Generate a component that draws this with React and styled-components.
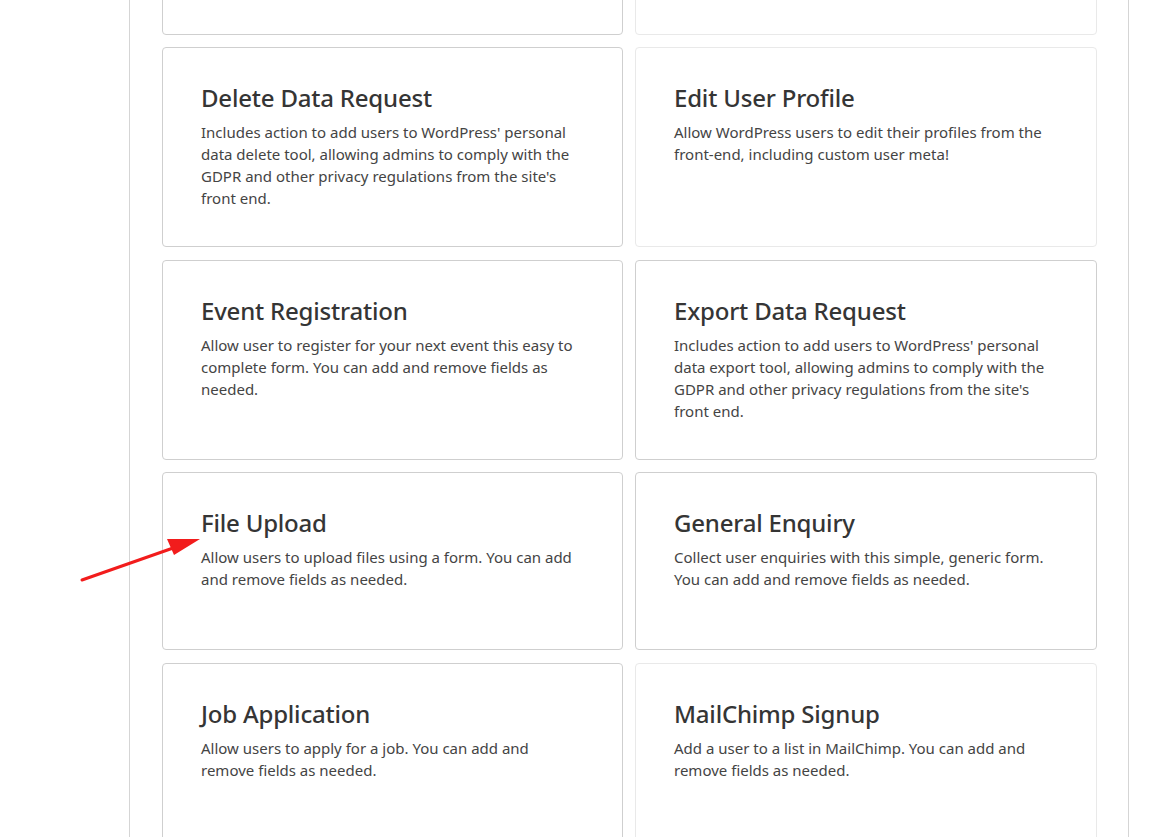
import React from "react";
import styled, { createGlobalStyle } from "styled-components";

const GlobalStyle = createGlobalStyle`
  html, body {
    margin: 0;
    padding: 0;
    background: #fff;
    overflow: hidden;
  }
  body {
    font-family: "Noto Sans", "Open Sans", Arial, sans-serif;
    color: #444;
  }
`;

const Page = styled.div`
  position: relative;
  height: 837px;
  overflow: hidden;
`;

const Container = styled.div`
  margin-left: 129px;
  width: 1000px;
  box-sizing: border-box;
  min-height: 837px;
  border-left: 1px solid #d5d5d5;
  border-right: 1px solid #d5d5d5;
  padding: 0 31px 0 32px;
`;

const Grid = styled.div`
  display: grid;
  grid-template-columns: 461px 462px;
  column-gap: 12px;
  row-gap: 12.5px;
  margin-top: -143.5px;
`;

const Card = styled.div`
  box-sizing: border-box;
  min-height: 178px;
  border: 1px solid ${(p) => (p.$light ? "#e9e9e9" : "#cfcfcf")};
  border-radius: 4px;
  background: #fff;
  padding: 35px 38px 37px;
`;

const Title = styled.h3`
  margin: 0 0 9px;
  font-size: 24px;
  line-height: 29px;
  font-weight: 500;
  color: #353535;
  letter-spacing: -0.2px;
`;

const Desc = styled.p`
  margin: 0;
  font-size: 15px;
  line-height: 22px;
  color: #444;
`;

const Arrow = styled.svg`
  position: absolute;
  left: 0;
  top: 0;
  pointer-events: none;
`;

const forms = [
  { light: false },
  { light: true },
  {
    title: "Delete Data Request",
    desc: "Includes action to add users to WordPress' personal data delete tool, allowing admins to comply with the GDPR and other privacy regulations from the site's front end.",
  },
  {
    title: "Edit User Profile",
    desc: "Allow WordPress users to edit their profiles from the front-end, including custom user meta!",
    light: true,
  },
  {
    title: "Event Registration",
    desc: "Allow user to register for your next event this easy to complete form. You can add and remove fields as needed.",
  },
  {
    title: "Export Data Request",
    desc: "Includes action to add users to WordPress' personal data export tool, allowing admins to comply with the GDPR and other privacy regulations from the site's front end.",
  },
  {
    title: "File Upload",
    desc: "Allow users to upload files using a form. You can add and remove fields as needed.",
  },
  {
    title: "General Enquiry",
    desc: "Collect user enquiries with this simple, generic form. You can add and remove fields as needed.",
  },
  {
    title: "Job Application",
    desc: "Allow users to apply for a job. You can add and remove fields as needed.",
  },
  {
    title: "MailChimp Signup",
    desc: "Add a user to a list in MailChimp. You can add and remove fields as needed.",
    light: true,
  },
];

export default function App() {
  return (
    <Page>
      <GlobalStyle />
      <Container>
        <Grid>
          {forms.map((f, i) => (
            <Card key={i} $light={f.light}>
              {f.title && <Title>{f.title}</Title>}
              {f.desc && <Desc>{f.desc}</Desc>}
            </Card>
          ))}
        </Grid>
      </Container>
      <Arrow width="1167" height="837" viewBox="0 0 1167 837">
        <line x1="82" y1="580" x2="176" y2="547" stroke="#f21c1c" strokeWidth="3" strokeLinecap="round" />
        <polygon points="200,539 167,539 174,555" fill="#f21c1c" />
      </Arrow>
    </Page>
  );
}
